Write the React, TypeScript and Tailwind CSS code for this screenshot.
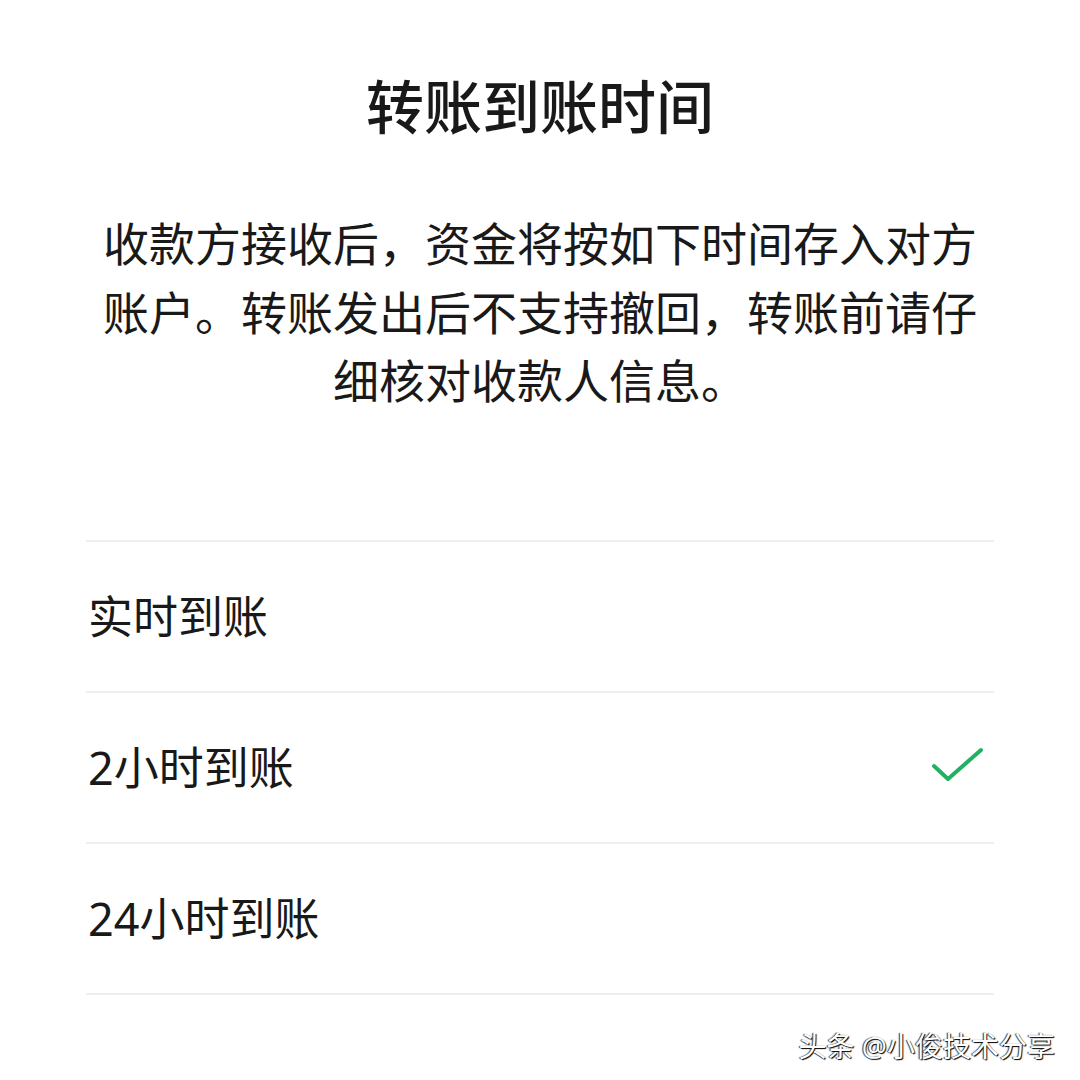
import React, { useState } from 'react';

const options = [
  { id: 'realtime', label: '实时到账' },
  { id: '2h', label: '2小时到账' },
  { id: '24h', label: '24小时到账' },
];

const font = { fontFamily: '"Noto Sans", "Noto Sans CJK SC", sans-serif' };

const Check: React.FC = () => (
  <svg width="56" height="40" viewBox="0 0 56 40" fill="none">
    <path d="M4 19 L18 32 L51 3" stroke="#22b163" strokeWidth="4" strokeLinecap="round" strokeLinejoin="round" />
  </svg>
);

const App: React.FC = () => {
  const [selected, setSelected] = useState('2h');

  return (
    <div className="relative w-[1080px] h-[1080px] bg-white overflow-hidden text-[#191919]" style={font}>
      <div className="flex flex-col items-center pt-[67px]">
        <h1 className="text-[58px] font-medium leading-[80px]">转账到账时间</h1>
        <p className="mt-[62px] w-[890px] text-center text-[46px] leading-[68.5px]">
          收款方接收后，资金将按如下时间存入对方账户。转账发出后不支持撤回，转账前请仔细核对收款人信息。
        </p>
      </div>

      <div className="mx-[86px] mt-[125px] border-t-2 border-[#eeeeee]">
        {options.map(o => (
          <button key={o.id} onClick={() => setSelected(o.id)}
            className="flex w-full h-[151px] items-center justify-between border-b-2 border-[#eeeeee] pl-[2px] pr-[8px] text-left">
            <span className="text-[45px] leading-none">{o.label}</span>
            {selected === o.id && <Check />}
          </button>
        ))}
      </div>

      <div className="absolute right-[25px] bottom-[20px] text-[28px] leading-none text-white"
        style={{ textShadow: '1px 1px 1px #000, -1px 0 1px #333' }}>
        头条 @小俊技术分享
      </div>
    </div>
  );
};

export default App;
